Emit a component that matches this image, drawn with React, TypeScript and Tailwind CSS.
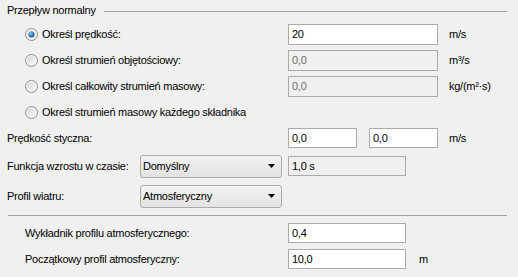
import React from "react";

function Radio({ checked }: { checked?: boolean }) {
  return (
    <svg width="13" height="13" viewBox="0 0 13 13" className="shrink-0">
      <defs>
        <linearGradient id="rg" x1="0" y1="0" x2="1" y2="1">
          <stop offset="0" stopColor="#d4d4d4" />
          <stop offset="1" stopColor="#fbfbfb" />
        </linearGradient>
        <radialGradient id="dot" cx="0.4" cy="0.35" r="0.7">
          <stop offset="0" stopColor="#8fd0f6" />
          <stop offset="0.6" stopColor="#2c7cc0" />
          <stop offset="1" stopColor="#1a4f84" />
        </radialGradient>
      </defs>
      <circle cx="6.5" cy="6.5" r="6" fill="#f4f4f4" stroke="#8f8f8f" strokeWidth="1" />
      <circle cx="6.5" cy="6.5" r="4.3" fill="url(#rg)" />
      {checked && <circle cx="6.5" cy="6.5" r="3" fill="url(#dot)" />}
    </svg>
  );
}

function Field({
  value,
  w,
  disabled,
  readonly,
  h = "h-[21px]",
}: {
  value: string;
  w: string;
  disabled?: boolean;
  readonly?: boolean;
  h?: string;
}) {
  const bg = disabled || readonly ? "bg-[#f0f0f0]" : "bg-white";
  const color = disabled ? "text-[#6d6d6d]" : "text-black";
  return (
    <div className={`${w} ${h} ${bg} ${color} border border-[#ababab] flex items-center pl-[3px]`}>
      {value}
    </div>
  );
}

function Combo({ value }: { value: string }) {
  return (
    <div className="w-[142px] h-[23px] border border-[#acacac] rounded-[3px] bg-gradient-to-b from-[#f3f3f3] to-[#e3e3e3] flex items-center pl-[2px] pr-[6px] justify-between">
      <span>{value}</span>
      <svg width="7" height="4" viewBox="0 0 7 4">
        <path d="M0 0H7L3.5 4Z" fill="#000" />
      </svg>
    </div>
  );
}

export default function App() {
  return (
    <div
      className="w-[518px] h-[277px] bg-[#f0f0f0] text-[11px] tracking-[-0.25px] text-black overflow-hidden"
      style={{ fontFamily: '"Liberation Sans", Arial, sans-serif' }}
    >
      <div className="h-[21px] flex items-center pl-[7px] pr-[11px]">
        <span>Przepływ normalny</span>
        <div className="flex-1 h-px bg-[#a0a0a0] ml-[8px] mt-[2px]" />
      </div>

      {[
        { label: "Określ prędkość:", value: "20", unit: "m/s", checked: true },
        { label: "Określ strumień objętościowy:", value: "0,0", unit: "m³/s", disabled: true },
        { label: "Określ całkowity strumień masowy:", value: "0,0", unit: "kg/(m²·s)", disabled: true },
      ].map((r) => (
        <div key={r.label} className="h-[26px] flex items-center">
          <div className="w-[288px] flex items-center gap-[4px] pl-[25px]">
            <Radio checked={r.checked} />
            <span>{r.label}</span>
          </div>
          <Field value={r.value} w="w-[150px]" disabled={r.disabled} />
          <span className="ml-[11px]">{r.unit}</span>
        </div>
      ))}
      <div className="h-[26px] flex items-center">
        <div className="flex items-center gap-[4px] pl-[25px]">
          <Radio />
          <span>Określ strumień masowy każdego składnika</span>
        </div>
      </div>

      <div className="h-[26px] flex items-center">
        <div className="w-[288px] pl-[7px]">Prędkość styczna:</div>
        <Field value="0,0" w="w-[69px]" h="h-[20px]" />
        <div className="ml-[12px]">
          <Field value="0,0" w="w-[69px]" h="h-[20px]" />
        </div>
        <span className="ml-[11px]">m/s</span>
      </div>

      <div className="h-[26px] mt-[2px] flex items-center">
        <div className="w-[140px] pl-[7px]">Funkcja wzrostu w czasie:</div>
        <Combo value="Domyślny" />
        <div className="ml-[6px]">
          <Field value="1,0 s" w="w-[118px]" h="h-[20px]" readonly />
        </div>
      </div>

      <div className="h-[26px] mt-[4px] flex items-center">
        <div className="w-[140px] pl-[7px]">Profil wiatru:</div>
        <Combo value="Atmosferyczny" />
      </div>

      <div className="h-px bg-[#a0a0a0] ml-[8px] mr-[11px] mt-[6px]" />

      <div className="h-[26px] mt-[4px] flex items-center">
        <div className="w-[288px] pl-[25px]">Wykładnik profilu atmosferycznego:</div>
        <Field value="0,4" w="w-[118px]" h="h-[20px]" />
      </div>
      <div className="h-[26px] flex items-center">
        <div className="w-[288px] pl-[25px]">Początkowy profil atmosferyczny:</div>
        <Field value="10,0" w="w-[118px]" h="h-[20px]" />
        <span className="ml-[13px]">m</span>
      </div>
    </div>
  );
}
